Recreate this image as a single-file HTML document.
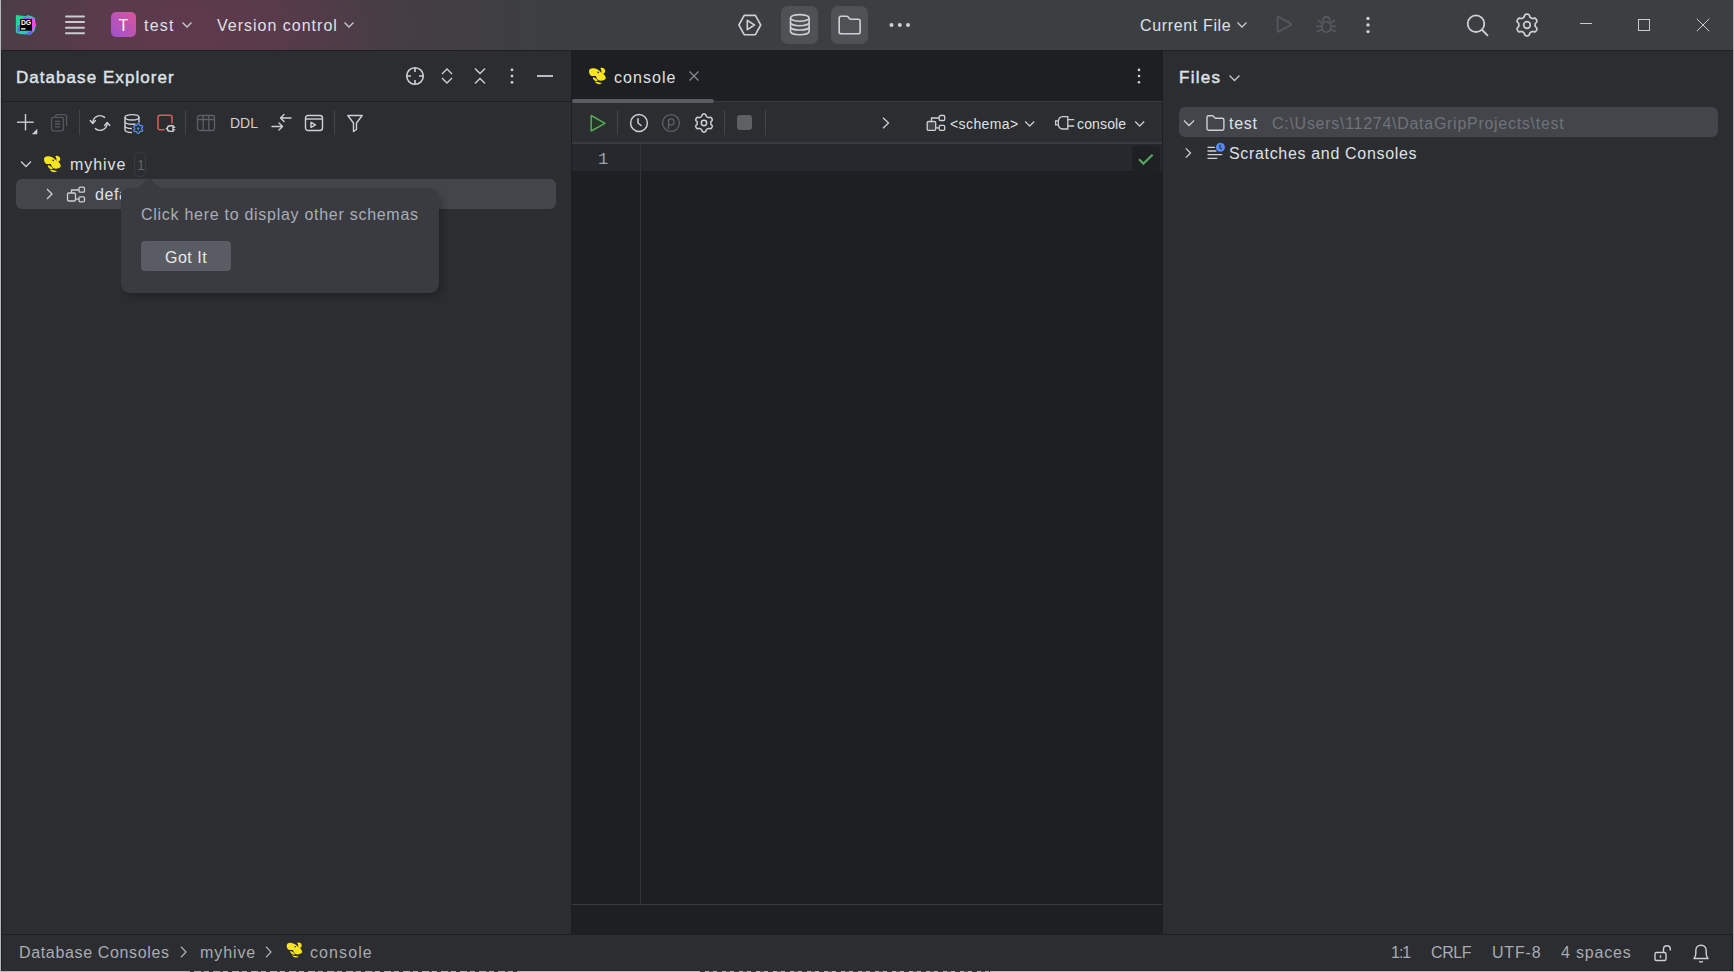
<!DOCTYPE html>
<html><head><meta charset="utf-8">
<style>
*{box-sizing:border-box;margin:0;padding:0}
html,body{width:1734px;height:972px;overflow:hidden;background:#b4b6b8}
body{font-family:"Liberation Sans",sans-serif;position:relative}
.a{position:absolute}
.t{position:absolute;white-space:pre;font-size:16px;line-height:20px;color:#dfe1e5}
svg{position:absolute;overflow:visible}
</style></head><body>

<!-- window -->
<div class="a" style="left:1px;top:0;width:1732px;height:971px;background:#1e1f22"></div>
<!-- title bar -->
<div class="a" id="title" style="left:1px;top:0;width:1732px;height:50px;background:#3c3f41"></div>
<div class="a" style="left:1px;top:0;width:900px;height:50px;background:radial-gradient(ellipse 370px 200px at 180px 30px, rgba(95,57,77,1) 0%, rgba(92,58,76,0.9) 25%, rgba(76,60,70,0.55) 60%, rgba(60,63,66,0) 100%)"></div>


<!-- DG logo -->
<svg style="left:15px;top:14px" width="22" height="22" viewBox="0 0 22 22">
<defs><linearGradient id="lg1" x1="0" y1="0" x2="0.6" y2="1"><stop offset="0" stop-color="#22d88f"/><stop offset="0.55" stop-color="#25d2a0"/><stop offset="1" stop-color="#3fb8c8"/></linearGradient>
<linearGradient id="lg2" x1="0" y1="0" x2="1" y2="0.3"><stop offset="0" stop-color="#7a5cf5"/><stop offset="1" stop-color="#ff45ed"/></linearGradient></defs>
<path d="M0.9 0.9 L11.4 2.2 L12.6 0.9 L16.6 2.2 L19.7 3.7 L20.9 11.4 L19.5 17 L15.1 20.7 L5 20 L0.9 18.8 Z" fill="url(#lg1)"/>
<path d="M8 3.2 L19.6 3.8 L20.2 11 L18.5 16.6 L15 16.6 Z" fill="url(#lg2)"/>
<path d="M2.5 12 L5.5 10 L6 17 L2 18.5 Z" fill="#6b57ff" opacity="0.85"/>
<path d="M11 19.5 L16 16.5 L17.5 17.5 L15.1 20.7 Z" fill="#6b57ff" opacity="0.9"/>
<rect x="5" y="5" width="12" height="11.7" fill="#000"/>
<text x="5.9" y="11.2" font-family="Liberation Sans" font-weight="700" font-size="6.8" fill="#fff">DG</text>
<rect x="6" y="14.2" width="4.5" height="1.3" fill="#fff"/>
</svg>
<!-- hamburger -->
<svg style="left:64px;top:15px" width="22" height="20" viewBox="0 0 22 20">
<g stroke="#c9cbd0" stroke-width="2" stroke-linecap="round"><line x1="2" y1="1.6" x2="20" y2="1.6"/><line x1="2" y1="7.1" x2="20" y2="7.1"/><line x1="2" y1="12.7" x2="20" y2="12.7"/><line x1="2" y1="18.2" x2="20" y2="18.2"/></g>
</svg>
<!-- project badge -->
<div class="a" style="left:111px;top:12px;width:25px;height:25px;border-radius:5px;background:linear-gradient(45deg,#9f52cf,#d9559a)"></div>
<div class="t" style="left:111px;top:16px;width:25px;text-align:center;font-size:16px;color:#fff">T</div>
<div class="t" id="tx-test" style="left:144px;top:16px;font-size:16px;letter-spacing:1.2px">test</div>
<svg style="left:181px;top:21px" width="12" height="8" viewBox="0 0 12 8"><path d="M1.5 1.5 L6 6 L10.5 1.5" fill="none" stroke="#c9cbd0" stroke-width="1.3"/></svg>
<div class="t" id="tx-vc" style="left:217px;top:16px;font-size:16px;letter-spacing:1.0px">Version control</div>
<svg style="left:343px;top:21px" width="12" height="8" viewBox="0 0 12 8"><path d="M1.5 1.5 L6 6 L10.5 1.5" fill="none" stroke="#c9cbd0" stroke-width="1.3"/></svg>

<!-- hexagon run -->
<svg style="left:737px;top:13px" width="26" height="24" viewBox="0 0 26 24"><path d="M1.9 12 L7.2 2.4 L18.4 2.4 L23.7 12 L18.4 21.7 L7.2 21.7 Z" fill="none" stroke="#ced0d6" stroke-width="1.6" stroke-linejoin="round"/><path d="M10.3 7.3 L17.4 12 L10.3 16.7 Z" fill="none" stroke="#ced0d6" stroke-width="1.6" stroke-linejoin="round"/></svg>
<!-- db button -->
<div class="a" style="left:781px;top:6px;width:37px;height:38px;border-radius:7px;background:#4f5254"></div>
<svg style="left:789px;top:13px" width="22" height="24" viewBox="0 0 22 24">
<g fill="none" stroke="#ced0d6" stroke-width="1.6">
<ellipse cx="10.8" cy="4.9" rx="9.3" ry="3.3"/>
<path d="M1.5 4.9 V18.5 C1.5 20.4 5.7 21.7 10.8 21.7 C15.9 21.7 20.1 20.4 20.1 18.5 V4.9"/>
<path d="M1.5 9.6 C1.5 11.4 5.7 12.7 10.8 12.7 C15.9 12.7 20.1 11.4 20.1 9.6"/>
<path d="M1.5 13.9 C1.5 15.7 5.7 17 10.8 17 C15.9 17 20.1 15.7 20.1 13.9"/>
</g></svg>
<!-- folder button -->
<div class="a" style="left:831px;top:6px;width:37px;height:38px;border-radius:7px;background:#4f5254"></div>
<svg style="left:837px;top:14px" width="26" height="22" viewBox="0 0 26 22"><path d="M2.2 4 Q2.2 2.2 4 2.2 L9.6 2.2 Q10.3 2.2 10.9 2.8 L13.2 5.3 L21.3 5.3 Q23.1 5.3 23.1 7.1 L23.1 18 Q23.1 19.8 21.3 19.8 L4 19.8 Q2.2 19.8 2.2 18 Z" fill="none" stroke="#ced0d6" stroke-width="1.6" stroke-linejoin="round"/></svg>
<!-- dots -->
<svg style="left:888px;top:22px" width="24" height="6" viewBox="0 0 24 6"><g fill="#ced0d6"><circle cx="3.5" cy="3" r="2"/><circle cx="11.8" cy="3" r="2"/><circle cx="20" cy="3" r="2"/></g></svg>

<div class="t" id="tx-cf" style="left:1140px;top:16px;font-size:16px;letter-spacing:0.65px">Current File</div>
<svg style="left:1236px;top:21px" width="12" height="8" viewBox="0 0 12 8"><path d="M1.5 1.5 L6 6 L10.5 1.5" fill="none" stroke="#c9cbd0" stroke-width="1.3"/></svg>
<!-- disabled run -->
<svg style="left:1275px;top:15px" width="20" height="20" viewBox="0 0 20 20"><path d="M2.6 2.7 Q2.6 1.5 3.8 2.1 L15.8 8.6 Q16.9 9.3 15.8 9.9 L3.8 16.6 Q2.6 17.2 2.6 16 Z" fill="none" stroke="#56595f" stroke-width="1.7" stroke-linejoin="round"/></svg>
<!-- bug -->
<svg style="left:1315px;top:14px" width="22" height="21" viewBox="0 0 22 21"><g fill="none" stroke="#56595f" stroke-width="1.6" stroke-linecap="round">
<path d="M8 6.8 Q8 2.9 11.4 2.9 Q14.8 2.9 14.8 6.8"/>
<ellipse cx="11.4" cy="12.9" rx="4.6" ry="5.3"/>
<path d="M3 6.4 L7 9 M1.9 12.2 L6.6 12.2 M2.4 17.4 L7 15.5 M19.8 6.4 L15.8 9 M20.9 12.2 L16.2 12.2 M20.4 17.4 L15.8 15.5"/>
</g></svg>
<!-- kebab -->
<svg style="left:1365px;top:16px" width="6" height="18" viewBox="0 0 6 18"><g fill="#ced0d6"><circle cx="3" cy="2.4" r="1.7"/><circle cx="3" cy="8.9" r="1.7"/><circle cx="3" cy="15.6" r="1.7"/></g></svg>
<!-- search -->
<svg style="left:1465px;top:13px" width="26" height="25" viewBox="0 0 26 25">
<circle cx="11" cy="10.7" r="8.3" fill="none" stroke="#ced0d6" stroke-width="1.8"/>
<line x1="17.2" y1="17" x2="22.5" y2="22.3" stroke="#ced0d6" stroke-width="1.8" stroke-linecap="round"/>
</svg>
<!-- gear -->
<svg style="left:1515px;top:13px" width="24" height="24" viewBox="0 0 24 24"><path d="M20.2 12.0L20.2 12.5L20.2 13.1L20.4 13.7L21.2 14.5L21.9 15.3L21.9 16.1L21.7 16.8L21.4 17.4L21.0 18.0L20.5 18.5L19.8 18.9L18.7 18.7L17.7 18.5L17.0 18.6L16.6 18.8L16.1 19.1L15.6 19.4L15.2 19.7L14.8 20.1L14.5 21.2L14.0 22.2L13.4 22.6L12.7 22.8L12.0 22.8L11.3 22.8L10.6 22.6L10.0 22.2L9.5 21.2L9.2 20.1L8.8 19.7L8.4 19.4L7.9 19.1L7.4 18.8L7.0 18.6L6.3 18.5L5.3 18.7L4.2 18.9L3.5 18.5L3.0 18.0L2.6 17.4L2.3 16.8L2.1 16.1L2.1 15.3L2.8 14.5L3.6 13.7L3.8 13.1L3.8 12.5L3.8 12.0L3.8 11.5L3.8 10.9L3.6 10.3L2.8 9.5L2.1 8.7L2.1 7.9L2.3 7.2L2.6 6.6L3.0 6.0L3.5 5.5L4.2 5.1L5.3 5.3L6.3 5.5L7.0 5.4L7.4 5.2L7.9 4.9L8.4 4.6L8.8 4.3L9.2 3.9L9.5 2.8L10.0 1.8L10.6 1.4L11.3 1.2L12.0 1.2L12.7 1.2L13.4 1.4L14.0 1.8L14.5 2.8L14.8 3.9L15.2 4.3L15.6 4.6L16.1 4.9L16.6 5.2L17.0 5.4L17.7 5.5L18.7 5.3L19.8 5.1L20.5 5.5L21.0 6.0L21.4 6.6L21.7 7.2L21.9 7.9L21.9 8.7L21.2 9.5L20.4 10.3L20.2 10.9L20.2 11.5Z" fill="none" stroke="#ced0d6" stroke-width="1.7" stroke-linejoin="round"/><circle cx="12" cy="12" r="3.3" fill="none" stroke="#ced0d6" stroke-width="1.7"/></svg>
<!-- window controls -->
<div class="a" style="left:1580px;top:23px;width:12px;height:1px;background:#c9cbd0"></div>
<div class="a" style="left:1638px;top:19px;width:12px;height:12px;border:1px solid #c9cbd0"></div>
<svg style="left:1696px;top:18px" width="14" height="14" viewBox="0 0 14 14"><g stroke="#c9cbd0" stroke-width="1"><line x1="0.8" y1="0.8" x2="13.2" y2="13.2"/><line x1="13.2" y1="0.8" x2="0.8" y2="13.2"/></g></svg>

<!-- left panel -->
<div class="a" style="left:2px;top:51px;width:569px;height:883px;background:#2b2d30"></div>
<div class="a" style="left:1px;top:101px;width:570px;height:1px;background:#1e1f22"></div>

<div class="t" id="tx-de" style="left:16px;top:68px;font-size:17px;font-weight:400;letter-spacing:1.05px;-webkit-text-stroke:0.45px #dfe1e5">Database Explorer</div>
<!-- locate -->
<svg style="left:405px;top:66px" width="20" height="20" viewBox="0 0 20 20"><g fill="none" stroke="#ced0d6" stroke-width="1.6"><circle cx="10" cy="10" r="8.3"/><path d="M10 2 V6 M10 14 V18 M2 10 H6 M14 10 H18"/></g></svg>
<!-- expand -->
<svg style="left:440px;top:67px" width="14" height="18" viewBox="0 0 14 18"><g fill="none" stroke="#ced0d6" stroke-width="1.4"><path d="M2 7 L7 2 L12 7"/><path d="M2 11 L7 16 L12 11"/></g></svg>
<!-- collapse -->
<svg style="left:473px;top:67px" width="14" height="18" viewBox="0 0 14 18"><g fill="none" stroke="#ced0d6" stroke-width="1.4"><path d="M2 1.5 L7 6.5 L12 1.5"/><path d="M2 16.5 L7 11.5 L12 16.5"/></g></svg>
<!-- kebab -->
<svg style="left:509px;top:67px" width="6" height="18" viewBox="0 0 6 18"><g fill="#ced0d6"><circle cx="3" cy="2.8" r="1.4"/><circle cx="3" cy="9.1" r="1.4"/><circle cx="3" cy="15.3" r="1.4"/></g></svg>
<div class="a" style="left:537px;top:75px;width:16px;height:2px;background:#b9bcc1"></div>

<!-- toolbar -->
<svg style="left:15px;top:112px" width="24" height="24" viewBox="0 0 24 24"><g stroke="#ced0d6" stroke-width="1.4"><line x1="10.5" y1="2" x2="10.5" y2="18.5"/><line x1="2" y1="10.2" x2="18.7" y2="10.2"/></g><path d="M22.3 16.7 V22.2 H16.8 Z" fill="#ced0d6"/></svg>
<svg style="left:50px;top:113px" width="20" height="21" viewBox="0 0 20 21"><g fill="none" stroke="#55585e" stroke-width="1.3"><rect x="1.5" y="4.3" width="12" height="13.5" rx="2"/><path d="M5.5 4.3 V3.4 Q5.5 1.6 7.5 1.6 H14.6 Q16.6 1.6 16.6 3.6 V13"/><path d="M4.8 8.3 H10.2 M4.8 11 H10.2 M4.8 13.8 H10.2"/></g></svg>
<div class="a" style="left:79px;top:110px;width:1px;height:25px;background:#43454a"></div>
<!-- refresh -->
<svg style="left:88px;top:113px" width="24" height="20" viewBox="0 0 24 20"><g fill="none" stroke="#ced0d6" stroke-width="1.4" stroke-linecap="round" stroke-linejoin="round"><path d="M16.6 4.4 A7.2 7.2 0 0 0 4.8 10"/><path d="M7.4 15.6 A7.2 7.2 0 0 0 19.2 10"/><path d="M2.2 7.6 L4.8 10.4 L7.4 7.6"/><path d="M16.6 12.4 L19.2 9.6 L21.8 12.4"/></g></svg>
<!-- db gear -->
<svg style="left:123px;top:113px" width="22" height="23" viewBox="0 0 22 23"><g fill="none" stroke="#ced0d6" stroke-width="1.4">
<ellipse cx="9" cy="4.3" rx="7" ry="2.7"/><path d="M2 4.3 V16.8 C2 18.3 5 19.5 9 19.5 M16 4.3 V9.5"/><path d="M2 8.6 C2 10.1 5 11.3 9 11.3 C10.5 11.3 11.5 11.2 12.5 11"/><path d="M2 12.8 C2 14.3 5 15.5 9 15.5"/></g>
<path d="M18.7 15.5L18.7 15.9L18.9 16.3L19.6 16.9L19.7 17.5L19.4 17.9L19.1 18.4L18.6 18.6L17.7 18.3L17.3 18.3L16.9 18.5L16.6 18.7L16.4 19.1L16.2 20.0L15.7 20.4L15.2 20.4L14.7 20.4L14.2 20.0L14.0 19.1L13.8 18.7L13.4 18.5L13.1 18.3L12.7 18.3L11.8 18.6L11.3 18.4L11.0 17.9L10.7 17.5L10.8 16.9L11.5 16.3L11.7 15.9L11.7 15.5L11.7 15.1L11.5 14.7L10.8 14.1L10.7 13.5L11.0 13.1L11.3 12.6L11.8 12.4L12.7 12.7L13.1 12.7L13.4 12.5L13.8 12.3L14.0 11.9L14.2 11.0L14.7 10.6L15.2 10.6L15.7 10.6L16.2 11.0L16.4 11.9L16.6 12.3L16.9 12.5L17.3 12.7L17.7 12.7L18.6 12.4L19.1 12.6L19.4 13.1L19.7 13.5L19.6 14.1L18.9 14.7L18.7 15.1Z" fill="#2b2d30" stroke="#548af7" stroke-width="1.3"/><circle cx="15.2" cy="15.5" r="1.2" fill="#548af7"/></svg>
<!-- red square plug -->
<svg style="left:156px;top:114px" width="22" height="21" viewBox="0 0 22 21"><path d="M8.5 15.8 H4 Q2 15.8 2 13.8 V3.3 Q2 1.3 4 1.3 H14 Q16 1.3 16 3.3 V9.5" fill="none" stroke="#db5c5c" stroke-width="1.5"/>
<g fill="none" stroke="#ced0d6" stroke-width="1.4"><path d="M17 11.8 H14.2 Q11.3 11.8 11.3 14.6 Q11.3 17.4 14.2 17.4 H17 Z"/><path d="M17 13.3 H19.2 M17 15.9 H19.2 M11.3 14.6 H9.8"/></g></svg>
<div class="a" style="left:185px;top:110px;width:1px;height:25px;background:#43454a"></div>
<!-- table disabled -->
<svg style="left:196px;top:114px" width="20" height="18" viewBox="0 0 20 18"><g fill="none" stroke="#5d6066" stroke-width="1.3"><rect x="1.5" y="1.5" width="17" height="15" rx="2"/><path d="M1.5 5.5 H18.5 M7.2 1.5 V16.5 M12.8 1.5 V16.5"/></g></svg>
<div class="t" id="tx-ddl" style="left:230px;top:113px;font-size:14px;letter-spacing:0px;color:#ced0d6">DDL</div>
<!-- compare arrows -->
<svg style="left:270px;top:113px" width="23" height="20" viewBox="0 0 23 20"><g fill="none" stroke="#ced0d6" stroke-width="1.4" stroke-linecap="round" stroke-linejoin="round"><path d="M21 5 H11 M14 1.5 L10.5 5 L14 8.5"/><path d="M2 13.5 H12 M9 10 L12.5 13.5 L9 17"/></g></svg>
<!-- console window -->
<svg style="left:304px;top:114px" width="20" height="18" viewBox="0 0 20 18"><g fill="none" stroke="#ced0d6" stroke-width="1.4"><rect x="1.5" y="1.5" width="17" height="15" rx="2.5"/><path d="M1.5 5 H18.5"/><path d="M7 8.3 L11.5 10.8 L7 13.3 Z" stroke-linejoin="round"/></g></svg>
<div class="a" style="left:334px;top:110px;width:1px;height:25px;background:#43454a"></div>
<!-- filter -->
<svg style="left:346px;top:114px" width="18" height="19" viewBox="0 0 18 19"><path d="M1.8 1.5 H16.2 L10.5 9 V15.5 L7.5 17.5 V9 Z" fill="none" stroke="#ced0d6" stroke-width="1.4" stroke-linejoin="round"/></svg>

<!-- tree -->
<svg style="left:19px;top:159px" width="14" height="10" viewBox="0 0 14 10"><path d="M2 2.5 L7 7.5 L12 2.5" fill="none" stroke="#ced0d6" stroke-width="1.3"/></svg>
<svg style="left:40px;top:151px" width="26" height="26" viewBox="0 0 26 26"><g fill="#f9e51c">
<path d="M4 8.6 C3.8 5.6 6.5 4.9 9 5.3 C12 5.7 14.6 7.2 16.2 9.6 C18.6 10.6 20.9 13.4 20.8 15.5 C19.5 17.4 16.5 18.1 14.2 17.6 C12.2 16.9 11.2 14.8 10.9 13.1 C9.6 12.8 8.1 13.3 6.6 12.9 C4.9 12.3 4.1 10.6 4 8.6Z"/>
<path d="M15.3 5.3 C17 4.3 19.6 5 20.2 7.5 C20.6 9.5 19.2 10.6 17.4 10.9 L16.4 9.2 C16.7 8 16.2 6.5 15.3 5.3Z"/>
<path d="M7.8 14.2 C9.2 13.8 11.2 15.6 12.8 17.2 L12.2 18.2 C10 18.2 7.8 16.6 7.8 14.2Z"/>
<path d="M9.6 18.6 C12 19.2 14.5 19.6 17 20 C15.8 21.6 12 22 9.6 18.6Z"/>
<circle cx="13.2" cy="9.4" r="0.8" fill="#2b2d30"/>
</g></svg>
<div class="t" id="tx-mh" style="left:70px;top:155px;font-size:16px;letter-spacing:0.95px">myhive</div>
<div class="a" style="left:134px;top:152px;width:12px;height:25px;border:1px solid #393b40;border-radius:5px"></div>
<div class="t" style="left:137px;top:155px;font-size:14px;color:#5e6167">1</div>
<div class="a" style="left:16px;top:179px;width:540px;height:30px;border-radius:6px;background:#43454a"></div>
<svg style="left:44px;top:187px" width="10" height="14" viewBox="0 0 10 14"><path d="M3 2 L8 7 L3 12" fill="none" stroke="#ced0d6" stroke-width="1.3"/></svg>
<svg style="left:66px;top:186px" width="20" height="17" viewBox="0 0 20 17"><g fill="none" stroke="#ced0d6" stroke-width="1.3"><rect x="1.5" y="7" width="8" height="8" rx="1.3"/><rect x="13" y="1.2" width="5.5" height="5" rx="1.2"/><rect x="13" y="10.8" width="5.5" height="5" rx="1.2"/><path d="M5.5 7 V4 H13 M9.5 13.2 H13"/></g></svg>
<div class="a" style="left:90px;top:179px;width:31px;height:30px;overflow:hidden"><div class="t" id="tx-def" style="left:5px;top:6px;font-size:16px;letter-spacing:0.6px">default</div></div>

<!-- tooltip -->
<div class="a" style="left:121px;top:188px;width:318px;height:105px;border-radius:9px;background:#393b40;box-shadow:4px 5px 10px -3px rgba(0,0,0,0.35)"></div>
<svg style="left:137px;top:177px" width="24" height="12" viewBox="0 0 24 12"><path d="M0 12 L12 0.5 L24 12 Z" fill="#393b40"/></svg>
<div class="t" id="tx-tip" style="left:141px;top:205px;font-size:16px;letter-spacing:0.72px;color:#a9adb8">Click here to display other schemas</div>
<div class="a" style="left:141px;top:241px;width:90px;height:30px;border-radius:4px;background:#595c63"></div>
<div class="t" id="tx-got" style="left:165px;top:248px;font-size:16px;letter-spacing:0.5px;color:#e8e9ec">Got It</div>

<!-- editor toolbar -->
<div class="a" style="left:572px;top:102px;width:590px;height:40px;background:#2b2d30"></div>
<div class="a" style="left:572px;top:101px;width:590px;height:1px;background:#393b40"></div>
<div class="a" style="left:572px;top:142px;width:590px;height:2px;background:#393b40"></div>
<!-- current line -->
<div class="a" style="left:572px;top:144px;width:590px;height:27px;background:#26282e"></div>
<div class="a" style="left:640px;top:144px;width:1px;height:760px;background:#313438"></div>
<div class="a" style="left:572px;top:904px;width:590px;height:1px;background:#393b40"></div>
<!-- right panel -->
<div class="a" style="left:1163px;top:51px;width:570px;height:883px;background:#2b2d30"></div>
<!-- status bar -->
<div class="a" style="left:2px;top:935px;width:1730px;height:36px;background:#2b2d30"></div>
<div class="a" style="left:190px;top:971px;width:330px;height:1px;background:repeating-linear-gradient(90deg,#3a3b3e 0 4px,#b4b6b8 4px 11px,#55565a 11px 14px,#b4b6b8 14px 19px)"></div>
<div class="a" style="left:700px;top:971px;width:290px;height:1px;background:repeating-linear-gradient(90deg,#3a3b3e 0 5px,#b4b6b8 5px 9px,#55565a 9px 13px,#b4b6b8 13px 17px)"></div>

<!-- editor tab -->
<svg style="left:585px;top:63px" width="26" height="26" viewBox="0 0 26 26"><g fill="#f9e51c">
<path d="M4 8.6 C3.8 5.6 6.5 4.9 9 5.3 C12 5.7 14.6 7.2 16.2 9.6 C18.6 10.6 20.9 13.4 20.8 15.5 C19.5 17.4 16.5 18.1 14.2 17.6 C12.2 16.9 11.2 14.8 10.9 13.1 C9.6 12.8 8.1 13.3 6.6 12.9 C4.9 12.3 4.1 10.6 4 8.6Z"/>
<path d="M15.3 5.3 C17 4.3 19.6 5 20.2 7.5 C20.6 9.5 19.2 10.6 17.4 10.9 L16.4 9.2 C16.7 8 16.2 6.5 15.3 5.3Z"/>
<path d="M7.8 14.2 C9.2 13.8 11.2 15.6 12.8 17.2 L12.2 18.2 C10 18.2 7.8 16.6 7.8 14.2Z"/>
<path d="M9.6 18.6 C12 19.2 14.5 19.6 17 20 C15.8 21.6 12 22 9.6 18.6Z"/>
<circle cx="13.2" cy="9.4" r="0.8" fill="#2b2d30"/>
</g></svg>
<div class="t" id="tx-tab" style="left:614px;top:68px;font-size:16px;letter-spacing:1.05px">console</div>
<svg style="left:688px;top:70px" width="12" height="12" viewBox="0 0 12 12"><g stroke="#868a91" stroke-width="1.2"><line x1="1.5" y1="1.5" x2="10.5" y2="10.5"/><line x1="10.5" y1="1.5" x2="1.5" y2="10.5"/></g></svg>
<div class="a" style="left:572px;top:99px;width:142px;height:4px;border-radius:2px;background:#595c62"></div>
<svg style="left:1136px;top:67px" width="6" height="18" viewBox="0 0 6 18"><g fill="#ced0d6"><circle cx="3" cy="2.9" r="1.3"/><circle cx="3" cy="9" r="1.3"/><circle cx="3" cy="15.3" r="1.3"/></g></svg>
<!-- editor toolbar icons -->
<svg style="left:588px;top:113px" width="20" height="20" viewBox="0 0 20 20"><path d="M3.2 2.5 L17 10.3 L3.2 18 Z" fill="#253626" stroke="#57a85e" stroke-width="1.5" stroke-linejoin="round"/></svg>
<div class="a" style="left:617px;top:110px;width:1px;height:25px;background:#43454a"></div>
<svg style="left:629px;top:113px" width="20" height="20" viewBox="0 0 20 20"><g fill="none" stroke="#ced0d6" stroke-width="1.5"><circle cx="10" cy="10" r="8.4"/><path d="M9 5.8 V10 L12 12.5" stroke-linecap="round"/></g></svg>
<svg style="left:661px;top:113px" width="20" height="20" viewBox="0 0 20 20"><g fill="none" stroke="#5d6066" stroke-width="1.3"><circle cx="10" cy="10" r="8.4"/><path d="M7.5 6 V16"/><path d="M7.5 7.5 Q8.5 5.8 10.3 5.8 Q13 5.8 13 9 Q13 12.2 10.3 12.2 Q8.5 12.2 7.5 10.5"/></g></svg>
<svg style="left:694px;top:113px" width="20" height="20" viewBox="0 0 24 24"><path d="M20.2 12.0L20.2 12.5L20.2 13.1L20.4 13.7L21.2 14.5L21.9 15.3L21.9 16.1L21.7 16.8L21.4 17.4L21.0 18.0L20.5 18.5L19.8 18.9L18.7 18.7L17.7 18.5L17.0 18.6L16.6 18.8L16.1 19.1L15.6 19.4L15.2 19.7L14.8 20.1L14.5 21.2L14.0 22.2L13.4 22.6L12.7 22.8L12.0 22.8L11.3 22.8L10.6 22.6L10.0 22.2L9.5 21.2L9.2 20.1L8.8 19.7L8.4 19.4L7.9 19.1L7.4 18.8L7.0 18.6L6.3 18.5L5.3 18.7L4.2 18.9L3.5 18.5L3.0 18.0L2.6 17.4L2.3 16.8L2.1 16.1L2.1 15.3L2.8 14.5L3.6 13.7L3.8 13.1L3.8 12.5L3.8 12.0L3.8 11.5L3.8 10.9L3.6 10.3L2.8 9.5L2.1 8.7L2.1 7.9L2.3 7.2L2.6 6.6L3.0 6.0L3.5 5.5L4.2 5.1L5.3 5.3L6.3 5.5L7.0 5.4L7.4 5.2L7.9 4.9L8.4 4.6L8.8 4.3L9.2 3.9L9.5 2.8L10.0 1.8L10.6 1.4L11.3 1.2L12.0 1.2L12.7 1.2L13.4 1.4L14.0 1.8L14.5 2.8L14.8 3.9L15.2 4.3L15.6 4.6L16.1 4.9L16.6 5.2L17.0 5.4L17.7 5.5L18.7 5.3L19.8 5.1L20.5 5.5L21.0 6.0L21.4 6.6L21.7 7.2L21.9 7.9L21.9 8.7L21.2 9.5L20.4 10.3L20.2 10.9L20.2 11.5Z" fill="none" stroke="#ced0d6" stroke-width="1.8" stroke-linejoin="round"/><circle cx="12" cy="12" r="3.2" fill="none" stroke="#ced0d6" stroke-width="1.8"/></svg>
<div class="a" style="left:724px;top:110px;width:1px;height:25px;background:#43454a"></div>
<div class="a" style="left:737px;top:115px;width:15px;height:15px;border-radius:3px;background:#5f6062"></div>
<div class="a" style="left:765px;top:110px;width:1px;height:25px;background:#43454a"></div>
<svg style="left:880px;top:116px" width="10" height="14" viewBox="0 0 10 14"><path d="M3 1.8 L8.5 7 L3 12.2" fill="none" stroke="#ced0d6" stroke-width="1.3"/></svg>
<svg style="left:925px;top:114px" width="22" height="18" viewBox="0 0 22 18"><g fill="none" stroke="#ced0d6" stroke-width="1.3"><rect x="2.2" y="7.5" width="8.5" height="8.8" rx="1.3" fill="#43454a"/><rect x="14.2" y="1.5" width="5.5" height="5" rx="1.2"/><rect x="14.2" y="11.3" width="5.5" height="5" rx="1.2"/><path d="M6.5 7.5 V4 H14.2 M10.7 13.8 H14.2"/></g></svg>
<div class="t" id="tx-sch" style="left:950px;top:114px;font-size:14px;letter-spacing:0.4px">&lt;schema&gt;</div>
<svg style="left:1023px;top:120px" width="13" height="9" viewBox="0 0 13 9"><path d="M2.2 1.5 L6.7 6 L11.2 1.5" fill="none" stroke="#c9cbd0" stroke-width="1.3"/></svg>
<svg style="left:1053px;top:115px" width="24" height="16" viewBox="0 0 24 16"><g fill="none" stroke="#ced0d6" stroke-width="1.3"><path d="M14.8 1.6 H9.8 Q5.2 1.6 5.2 7.8 Q5.2 14 9.8 14 H14.8 Z"/><path d="M14.8 4.6 H21.2 M14.8 11 H21.2"/><path d="M5.2 5.8 H2.6 V9.8 H5.2"/></g></svg>
<div class="t" id="tx-con" style="left:1077px;top:114px;font-size:14px;letter-spacing:0.15px">console</div>
<svg style="left:1133px;top:120px" width="13" height="9" viewBox="0 0 13 9"><path d="M2.2 1.5 L6.7 6 L11.2 1.5" fill="none" stroke="#c9cbd0" stroke-width="1.3"/></svg>
<!-- line number -->
<div class="t" id="tx-ln" style="left:598px;top:150px;font-family:'Liberation Mono';font-size:17px;color:#a1a3ab">1</div>
<div class="a" style="left:1132px;top:146px;width:28px;height:25px;border-radius:4px;background:#1f2023"></div>
<svg style="left:1136px;top:151px" width="20" height="16" viewBox="0 0 20 16"><path d="M3 8.2 L7.4 12.6 L16.6 3.8" fill="none" stroke="#55a35d" stroke-width="2.2"/></svg>

<!-- files panel -->
<div class="t" id="tx-files" style="left:1179px;top:68px;font-size:17px;font-weight:400;letter-spacing:1.25px;-webkit-text-stroke:0.45px #dfe1e5">Files</div>
<svg style="left:1228px;top:74px" width="13" height="9" viewBox="0 0 13 9"><path d="M1.5 1.5 L6.5 6.5 L11.5 1.5" fill="none" stroke="#c9cbd0" stroke-width="1.3"/></svg>
<div class="a" style="left:1179px;top:107px;width:539px;height:30px;border-radius:6px;background:#43454a"></div>
<svg style="left:1182px;top:118px" width="14" height="10" viewBox="0 0 14 10"><path d="M2 2.5 L7 7.5 L12 2.5" fill="none" stroke="#ced0d6" stroke-width="1.3"/></svg>
<svg style="left:1205px;top:114px" width="22" height="18" viewBox="0 0 22 18"><path d="M2 3.5 Q2 1.8 3.7 1.8 L7.8 1.8 L10.3 4.3 L17.2 4.3 Q18.9 4.3 18.9 6 L18.9 14.6 Q18.9 16.2 17.2 16.2 L3.7 16.2 Q2 16.2 2 14.6 Z" fill="none" stroke="#ced0d6" stroke-width="1.4" stroke-linejoin="round"/></svg>
<div class="t" id="tx-ftest" style="left:1229px;top:114px;font-size:16px;letter-spacing:0.75px">test</div>
<div class="t" id="tx-path" style="left:1272px;top:114px;font-size:16px;letter-spacing:0.72px;color:#6f737a">C:\Users\11274\DataGripProjects\test</div>
<svg style="left:1182px;top:146px" width="10" height="14" viewBox="0 0 10 14"><path d="M3.8 2.4 L8.5 7 L3.8 11.6" fill="none" stroke="#ced0d6" stroke-width="1.3"/></svg>
<svg style="left:1205px;top:142px" width="22" height="20" viewBox="0 0 22 20"><g stroke="#ced0d6" stroke-width="1.3"><path d="M2.5 5.3 H9.9 M2.5 9 H11.4 M2.5 12.7 H17.3 M2.5 16.4 H12.3"/></g><circle cx="15.4" cy="5.3" r="4.5" fill="#548af7"/><path d="M15 2.8 V5.6 L16.7 7" fill="none" stroke="#2b2d30" stroke-width="1.2"/></svg>
<div class="t" id="tx-scr" style="left:1229px;top:144px;font-size:16px;letter-spacing:0.67px">Scratches and Consoles</div>

<!-- status bar -->
<div class="t" id="tx-dbc" style="left:19px;top:943px;font-size:16px;letter-spacing:0.65px;color:#a8abb2">Database Consoles</div>
<svg style="left:178px;top:945px" width="10" height="14" viewBox="0 0 10 14"><path d="M3 1.8 L8 7 L3 12.2" fill="none" stroke="#a8abb2" stroke-width="1.3"/></svg>
<div class="t" id="tx-smh" style="left:200px;top:943px;font-size:16px;letter-spacing:0.9px;color:#a8abb2">myhive</div>
<svg style="left:263px;top:945px" width="10" height="14" viewBox="0 0 10 14"><path d="M3 1.8 L8 7 L3 12.2" fill="none" stroke="#a8abb2" stroke-width="1.3"/></svg>
<svg style="left:283px;top:938px" width="24" height="24" viewBox="0 0 26 26"><g fill="#f9e51c">
<path d="M4 8.6 C3.8 5.6 6.5 4.9 9 5.3 C12 5.7 14.6 7.2 16.2 9.6 C18.6 10.6 20.9 13.4 20.8 15.5 C19.5 17.4 16.5 18.1 14.2 17.6 C12.2 16.9 11.2 14.8 10.9 13.1 C9.6 12.8 8.1 13.3 6.6 12.9 C4.9 12.3 4.1 10.6 4 8.6Z"/>
<path d="M15.3 5.3 C17 4.3 19.6 5 20.2 7.5 C20.6 9.5 19.2 10.6 17.4 10.9 L16.4 9.2 C16.7 8 16.2 6.5 15.3 5.3Z"/>
<path d="M7.8 14.2 C9.2 13.8 11.2 15.6 12.8 17.2 L12.2 18.2 C10 18.2 7.8 16.6 7.8 14.2Z"/>
<path d="M9.6 18.6 C12 19.2 14.5 19.6 17 20 C15.8 21.6 12 22 9.6 18.6Z"/>
<circle cx="13.2" cy="9.4" r="0.8" fill="#2b2d30"/>
</g></svg>
<div class="t" id="tx-scon" style="left:310px;top:943px;font-size:16px;letter-spacing:1.1px;color:#a8abb2">console</div>
<div class="t" id="tx-11" style="left:1391px;top:943px;font-size:16px;letter-spacing:-1px;color:#a8abb2">1:1</div>
<div class="t" id="tx-crlf" style="left:1431px;top:943px;font-size:16px;letter-spacing:-0.4px;color:#a8abb2">CRLF</div>
<div class="t" id="tx-utf" style="left:1492px;top:943px;font-size:16px;letter-spacing:0.8px;color:#a8abb2">UTF-8</div>
<div class="t" id="tx-sp" style="left:1561px;top:943px;font-size:16px;letter-spacing:0.8px;color:#a8abb2">4 spaces</div>
<svg style="left:1653px;top:944px" width="20" height="18" viewBox="0 0 20 18"><g fill="none" stroke="#ced0d6" stroke-width="1.4"><rect x="2" y="8.5" width="11" height="8" rx="1.5"/><path d="M10.5 8.5 V5 Q10.5 1.8 14 1.8 Q17.3 1.8 17.3 5 V6.5"/><path d="M7.5 11.2 V13.8"/></g></svg>
<svg style="left:1691px;top:943px" width="20" height="21" viewBox="0 0 20 21"><g fill="none" stroke="#ced0d6" stroke-width="1.4" stroke-linejoin="round"><path d="M3 15.5 Q4.8 13.5 4.8 10.5 V8 Q4.8 2.2 10 2.2 Q15.2 2.2 15.2 8 V10.5 Q15.2 13.5 17 15.5 Z"/><path d="M8.2 18.3 Q10 19.8 11.8 18.3"/></g></svg>


</body></html>
